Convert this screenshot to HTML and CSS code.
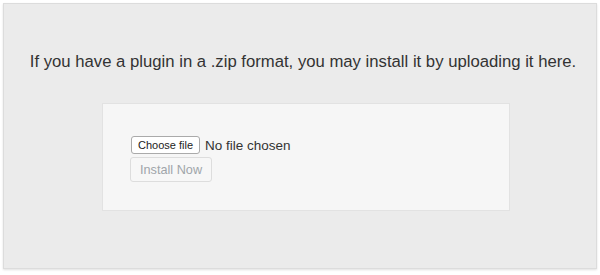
FILE: index.html
```html
<!DOCTYPE html>
<html lang="en">
<head>
    <meta charset="UTF-8">
    <meta name="viewport" content="width=device-width, initial-scale=1.0">
    <title>Upload Plugin</title>
    <link rel="stylesheet" href="styles.css">
</head>
<body>
    <div class="frame">
        <p class="install-help">If you have a plugin in a .zip format, you may install it by uploading it here.</p>
        <form class="upload-form" onsubmit="return false">
            <div class="file-row">
                <span class="file-btn">Choose file</span>
                <span class="file-name">No file chosen</span>
            </div>
            <button type="submit" class="install-btn" disabled>Install Now</button>
        </form>
    </div>
</body>
</html>
```

FILE: styles.css
```css
body {
    font-family: "Liberation Sans", Arial, sans-serif;
    margin: 0;
    padding: 0;
    background-color: #fff;
}
.frame {
    margin: 3px;
    height: 266px;
    box-sizing: border-box;
    padding-top: 48px;
    background-color: #ebebeb;
    border: 1px solid #dcdcdc;
    box-shadow: 0 1px 2px rgba(0, 0, 0, 0.12);
}
.install-help {
    margin: 0 0 31px;
    padding-left: 6px;
    text-align: center;
    font-size: 16.7px;
    line-height: 20px;
    color: #333;
}
.upload-form {
    width: 408px;
    height: 108px;
    box-sizing: border-box;
    margin-left: 98px;
    padding: 32px 27px;
    background-color: #f6f6f6;
    border: 1px solid #e2e2e2;
}
.file-row {
    display: flex;
    align-items: center;
    gap: 5px;
}
.file-btn {
    display: inline-block;
    margin-left: 1px;
    padding: 1px 6px;
    font-size: 11px;
    line-height: 14px;
    color: #222;
    background-color: #fff;
    border: 1px solid #aaa;
    border-radius: 3px;
}
.file-name {
    font-size: 13.5px;
    color: #333;
}
.install-btn {
    display: block;
    margin-top: 3px;
    padding: 0 9px;
    height: 25px;
    font-family: inherit;
    font-size: 12.7px;
    color: #a0a5aa;
    background-color: #f7f7f7;
    border: 1px solid #ddd;
    border-radius: 3px;
}
```
